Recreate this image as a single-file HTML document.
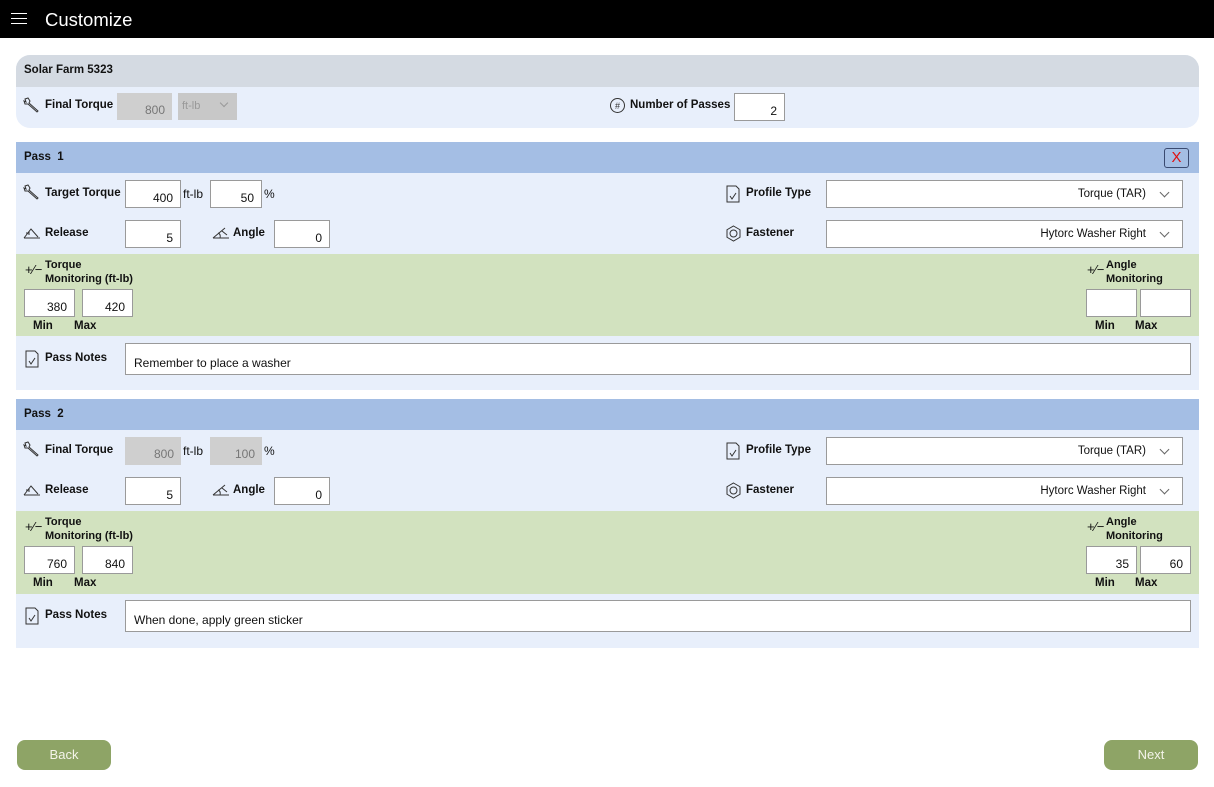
<!DOCTYPE html>
<html><head><meta charset="utf-8"><style>
*{margin:0;padding:0;box-sizing:border-box}
body{width:1214px;height:787px;background:#fff;font-family:"Liberation Sans",sans-serif;position:relative;overflow:hidden;font-size:12px;color:#111}
.a{position:absolute}
.b{font-weight:bold;font-size:11.5px}
.in{position:absolute;background:#fff;border:1px solid #9a9a9a;text-align:right;padding:0 7px;font-size:12px;height:28px;line-height:34px}
.gr{background:#cfcfcf;border-color:#cfcfcf;color:#777}
.dd{position:absolute;background:#fff;border:1px solid #9a9a9a;height:28px;font-size:11.5px;line-height:26px;text-align:right;padding-right:36px}
.dd:after{content:"";position:absolute;right:14px;top:8px;width:6px;height:6px;border-right:1px solid #666;border-bottom:1px solid #666;transform:rotate(45deg)}
.btn{position:absolute;background:#8ea466;color:#f4f4ea;border-radius:8px;text-align:center;font-size:13px;line-height:30px;height:30px;width:94px}
</style></head><body>
<div class="a" style="left:0;top:0;width:1214px;height:38px;background:#000"></div>
<div class="a" style="left:11px;top:13px;width:16px;height:1px;background:#fff;box-shadow:0 5px 0 #fff,0 10px 0 #fff"></div>
<div class="a" style="left:45px;top:9px;color:#fff;font-size:18.5px">Customize</div>

<div class="a" style="left:16px;top:55px;width:1183px;height:73px;border-radius:14px;overflow:hidden;background:#e8effb">
 <div class="a" style="left:0;top:0;width:100%;height:32px;background:#d4dae2"></div>
</div>
<div class="a b" style="left:24px;top:64px">Solar Farm 5323</div>
<svg class="a" style="left:23px;top:97px" width="18" height="16" viewBox="0 0 18 16"><path d="M2 2 L5 1 L7 4 L6 6 L15 14 L14 15 L5 7 L2 7 L1 4 L3 5 Z" fill="none" stroke="#333" stroke-width="1"/></svg>
<div class="a b" style="left:45px;top:99px">Final Torque</div>
<div class="in gr" style="left:117px;top:93px;width:55px;height:27px;border:none">800</div>
<div class="a" style="left:178px;top:93px;width:59px;height:27px;background:#c8c8c8;color:#999;font-size:11px;line-height:27px;padding-left:4px">ft-lb<span style="position:absolute;left:43px;top:7px;width:6px;height:6px;border-right:1px solid #999;border-bottom:1px solid #999;transform:rotate(45deg)"></span></div>
<svg class="a" style="left:609px;top:97px" width="17" height="17"><circle cx="8.5" cy="8.5" r="7" fill="none" stroke="#333"/><text x="8.5" y="12" font-size="9" text-anchor="middle" font-family="Liberation Sans" fill="#333">#</text></svg>
<div class="a b" style="left:630px;top:99px">Number of Passes</div>
<div class="in" style="left:734px;top:93px;width:51px">2</div>

<div class="a" style="left:16px;top:142px;width:1183px;height:31px;background:#a4bee4"></div>
<div class="a b" style="left:24px;top:151px">Pass&nbsp; 1</div>
<div class="a" style="left:1164px;top:148px;width:25px;height:20px;border:1px solid #3a4a70;border-radius:3px;color:#e01010;text-align:center;font-size:15px;line-height:18px">X</div>
<div class="a" style="left:16px;top:173px;width:1183px;height:81px;background:#e8effb"></div>
<div class="a" style="left:16px;top:254px;width:1183px;height:82px;background:#d2e2bf"></div>
<div class="a" style="left:16px;top:336px;width:1183px;height:54px;background:#e8effb"></div>
<svg class="a" style="left:23px;top:184px" width="18" height="16" viewBox="0 0 18 16"><path d="M2 2 L5 1 L7 4 L6 6 L15 14 L14 15 L5 7 L2 7 L1 4 L3 5 Z" fill="none" stroke="#333"/></svg>
<div class="a b" style="left:45px;top:187px">Target Torque</div>
<div class="in" style="left:125px;top:180px;width:56px">400</div>
<div class="a" style="left:183px;top:187px">ft-lb</div>
<div class="in" style="left:210px;top:180px;width:52px">50</div>
<div class="a" style="left:264px;top:187px">%</div>
<svg class="a" style="left:23px;top:226px" width="18" height="14"><path d="M1 12 L17 12 M1 12 L8 3 L15 11 M3 7 L6 7 M6 5 L6 9" fill="none" stroke="#333"/></svg>
<div class="a b" style="left:45px;top:227px">Release</div>
<div class="in" style="left:125px;top:220px;width:56px">5</div>
<svg class="a" style="left:212px;top:226px" width="18" height="14"><path d="M1 12 L17 12 M1 12 L13 2 M8 12 Q9 8 6 7 M10 5 L15 9" fill="none" stroke="#333"/></svg>
<div class="a b" style="left:233px;top:227px">Angle</div>
<div class="in" style="left:274px;top:220px;width:56px">0</div>
<svg class="a" style="left:726px;top:185px" width="14" height="18"><path d="M1 1 L10 1 L13 4 L13 17 L1 17 Z M4 11 L6 14 L10 8" fill="none" stroke="#333"/></svg>
<div class="a b" style="left:746px;top:187px">Profile Type</div>
<div class="dd" style="left:826px;top:180px;width:357px">Torque (TAR)</div>
<svg class="a" style="left:725px;top:225px" width="17" height="17"><path d="M8.5 1 L15 4.75 L15 12.25 L8.5 16 L2 12.25 L2 4.75 Z" fill="none" stroke="#333"/><circle cx="8.5" cy="8.5" r="3.5" fill="none" stroke="#333"/></svg>
<div class="a b" style="left:746px;top:227px">Fastener</div>
<div class="dd" style="left:826px;top:220px;width:357px">Hytorc Washer Right</div>
<div class="a" style="left:25px;top:262px;font-size:13px">+∕−</div>
<div class="a b" style="left:45px;top:258px;font-size:11px;line-height:14px">Torque<br>Monitoring (ft-lb)</div>
<div class="in" style="left:24px;top:289px;width:51px">380</div>
<div class="in" style="left:82px;top:289px;width:51px">420</div>
<div class="a b" style="left:33px;top:320px">Min</div>
<div class="a b" style="left:74px;top:320px">Max</div>
<div class="a" style="left:1087px;top:262px;font-size:13px">+∕−</div>
<div class="a b" style="left:1106px;top:258px;font-size:11px;line-height:14px">Angle<br>Monitoring</div>
<div class="in" style="left:1086px;top:289px;width:51px"></div>
<div class="in" style="left:1140px;top:289px;width:51px"></div>
<div class="a b" style="left:1095px;top:320px">Min</div>
<div class="a b" style="left:1135px;top:320px">Max</div>
<svg class="a" style="left:25px;top:350px" width="14" height="18"><path d="M1 1 L10 1 L13 4 L13 17 L1 17 Z M4 11 L6 14 L10 8" fill="none" stroke="#333"/></svg>
<div class="a b" style="left:45px;top:352px">Pass Notes</div>
<div class="in" style="left:125px;top:343px;width:1066px;height:32px;text-align:left;padding-left:8px;line-height:38px">Remember to place a washer</div>

<div class="a" style="left:16px;top:399px;width:1183px;height:31px;background:#a4bee4"></div>
<div class="a b" style="left:24px;top:408px">Pass&nbsp; 2</div>
<div class="a" style="left:16px;top:430px;width:1183px;height:81px;background:#e8effb"></div>
<div class="a" style="left:16px;top:511px;width:1183px;height:83px;background:#d2e2bf"></div>
<div class="a" style="left:16px;top:594px;width:1183px;height:54px;background:#e8effb"></div>
<svg class="a" style="left:23px;top:441px" width="18" height="16" viewBox="0 0 18 16"><path d="M2 2 L5 1 L7 4 L6 6 L15 14 L14 15 L5 7 L2 7 L1 4 L3 5 Z" fill="none" stroke="#333"/></svg>
<div class="a b" style="left:45px;top:444px">Final Torque</div>
<div class="in gr" style="left:125px;top:437px;width:56px;border:none">800</div>
<div class="a" style="left:183px;top:444px">ft-lb</div>
<div class="in gr" style="left:210px;top:437px;width:52px;border:none">100</div>
<div class="a" style="left:264px;top:444px">%</div>
<svg class="a" style="left:23px;top:483px" width="18" height="14"><path d="M1 12 L17 12 M1 12 L8 3 L15 11 M3 7 L6 7 M6 5 L6 9" fill="none" stroke="#333"/></svg>
<div class="a b" style="left:45px;top:484px">Release</div>
<div class="in" style="left:125px;top:477px;width:56px">5</div>
<svg class="a" style="left:212px;top:483px" width="18" height="14"><path d="M1 12 L17 12 M1 12 L13 2 M8 12 Q9 8 6 7 M10 5 L15 9" fill="none" stroke="#333"/></svg>
<div class="a b" style="left:233px;top:484px">Angle</div>
<div class="in" style="left:274px;top:477px;width:56px">0</div>
<svg class="a" style="left:726px;top:442px" width="14" height="18"><path d="M1 1 L10 1 L13 4 L13 17 L1 17 Z M4 11 L6 14 L10 8" fill="none" stroke="#333"/></svg>
<div class="a b" style="left:746px;top:444px">Profile Type</div>
<div class="dd" style="left:826px;top:437px;width:357px">Torque (TAR)</div>
<svg class="a" style="left:725px;top:482px" width="17" height="17"><path d="M8.5 1 L15 4.75 L15 12.25 L8.5 16 L2 12.25 L2 4.75 Z" fill="none" stroke="#333"/><circle cx="8.5" cy="8.5" r="3.5" fill="none" stroke="#333"/></svg>
<div class="a b" style="left:746px;top:484px">Fastener</div>
<div class="dd" style="left:826px;top:477px;width:357px">Hytorc Washer Right</div>
<div class="a" style="left:25px;top:519px;font-size:13px">+∕−</div>
<div class="a b" style="left:45px;top:515px;font-size:11px;line-height:14px">Torque<br>Monitoring (ft-lb)</div>
<div class="in" style="left:24px;top:546px;width:51px">760</div>
<div class="in" style="left:82px;top:546px;width:51px">840</div>
<div class="a b" style="left:33px;top:577px">Min</div>
<div class="a b" style="left:74px;top:577px">Max</div>
<div class="a" style="left:1087px;top:519px;font-size:13px">+∕−</div>
<div class="a b" style="left:1106px;top:515px;font-size:11px;line-height:14px">Angle<br>Monitoring</div>
<div class="in" style="left:1086px;top:546px;width:51px">35</div>
<div class="in" style="left:1140px;top:546px;width:51px">60</div>
<div class="a b" style="left:1095px;top:577px">Min</div>
<div class="a b" style="left:1135px;top:577px">Max</div>
<svg class="a" style="left:25px;top:607px" width="14" height="18"><path d="M1 1 L10 1 L13 4 L13 17 L1 17 Z M4 11 L6 14 L10 8" fill="none" stroke="#333"/></svg>
<div class="a b" style="left:45px;top:609px">Pass Notes</div>
<div class="in" style="left:125px;top:600px;width:1066px;height:32px;text-align:left;padding-left:8px;line-height:38px">When done, apply green sticker</div>

<div class="btn" style="left:17px;top:740px">Back</div>
<div class="btn" style="left:1104px;top:740px">Next</div>
</body></html>
